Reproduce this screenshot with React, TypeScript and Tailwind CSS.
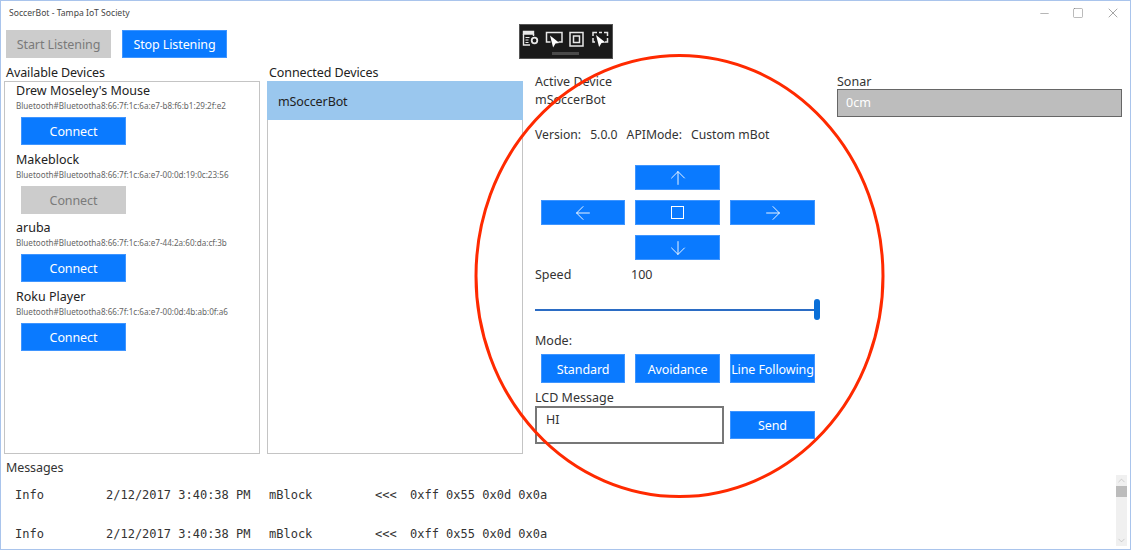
import { ArrowDown, ArrowLeft, ArrowRight, ArrowUp, ChevronDown, ChevronUp, Minus, Square, X } from 'lucide-react';
import type { ReactNode } from 'react';

const DEVICES = [
  { name: "Drew Moseley's Mouse", id: 'Bluetooth#Bluetootha8:66:7f:1c:6a:e7-b8:f6:b1:29:2f:e2', disabled: false },
  { name: 'Makeblock', id: 'Bluetooth#Bluetootha8:66:7f:1c:6a:e7-00:0d:19:0c:23:56', disabled: true },
  { name: 'aruba', id: 'Bluetooth#Bluetootha8:66:7f:1c:6a:e7-44:2a:60:da:cf:3b', disabled: false },
  { name: 'Roku Player', id: 'Bluetooth#Bluetootha8:66:7f:1c:6a:e7-00:0d:4b:ab:0f:a6', disabled: false },
];

const MESSAGES = [
  { level: 'Info', time: '2/12/2017 3:40:38 PM', source: 'mBlock', dir: '<<<', data: '0xff 0x55 0x0d 0x0a' },
  { level: 'Info', time: '2/12/2017 3:40:38 PM', source: 'mBlock', dir: '<<<', data: '0xff 0x55 0x0d 0x0a' },
];

function BlueButton({ children, className }: { children: ReactNode; className: string }) {
  return (
    <button className={`flex items-center justify-center pt-[3px] bg-[#0a7aff] border border-[#3f95ff] text-white text-[12.5px] tracking-[-0.1px] whitespace-nowrap ${className}`}>
      {children}
    </button>
  );
}

function ArrowButton({ children, className }: { children: ReactNode; className: string }) {
  return (
    <button className={`flex items-center justify-center bg-[#0a7aff] border border-[#3f95ff] text-white ${className}`}>
      {children}
    </button>
  );
}

function GreyButton({ children, className }: { children: ReactNode; className: string }) {
  return (
    <button className={`pt-[3px] bg-[#cccccc] text-[#7a7a7a] text-[12.5px] tracking-[-0.1px] ${className}`}>
      {children}
    </button>
  );
}

function CaptureBar() {
  return (
    <div className="absolute left-[518px] top-[23px] w-[94px] h-[35px] bg-[#1a1a1a] border border-[#555]">
      <svg width="92" height="33" viewBox="0 0 92 33" fill="none" stroke="#e8e8e8" strokeWidth="1.4">
        <path d="M3.5 6.5h10v2.5h-10z" fill="#e8e8e8" />
        <path d="M3.5 9v11h6.5M13.5 9v2" />
        <path d="M5.5 12.5h4M5.5 15h3M5.5 17.5h3" strokeWidth="1.2" />
        <circle cx="14.5" cy="15.5" r="2.8" strokeWidth="1.8" />
        <path d="M30.5 17h-4V7.5h15.5V17h-3.5" strokeWidth="1.5" />
        <path d="M30 10.5l9.5 7.5-4 .6-2.4 3.9z" fill="#fff" stroke="none" />
        <rect x="50" y="7.5" width="13" height="13.5" strokeWidth="1.5" />
        <rect x="53.5" y="11" width="6" height="6.5" strokeWidth="1.5" />
        <path d="M73 11V7.5h4M79 7.5h3M84 7.5h3.5V11M87.5 13v4H85M73 13v4h2" strokeWidth="1.5" />
        <path d="M76 10l9.5 7.5-4 .6-2.4 3.9z" fill="#fff" stroke="none" />
      </svg>
      <div className="absolute left-[32px] top-[27px] w-[27px] h-[3px] bg-[#4a4a4a]" />
    </div>
  );
}

function DeviceRow({ name, id, disabled }: { name: string; id: string; disabled: boolean }) {
  return (
    <div className="h-[68.5px] pl-[11px]">
      <p className="text-[12.5px] leading-[17px] text-[#222]">{name}</p>
      <p className="text-[8.1px] leading-[14px] text-[#666] whitespace-nowrap">{id}</p>
      {disabled ? (
        <GreyButton className="ml-[5px] mt-[4px] w-[105px] h-[28px]">Connect</GreyButton>
      ) : (
        <BlueButton className="ml-[5px] mt-[4px] w-[105px] h-[28px]">Connect</BlueButton>
      )}
    </div>
  );
}

export default function App() {
  return (
    <div className="relative w-[1131px] h-[550px] overflow-hidden bg-white border border-[#a9c4ec] font-['Noto_Sans',sans-serif] text-[#222]">
      {/* title bar */}
      <div className="flex items-center justify-between h-[24px] pl-[8px]">
        <span className="text-[8.6px] text-[#444]">SoccerBot - Tampa IoT Society</span>
        <div className="flex items-center gap-[21px] pr-[9px] text-[#777]">
          <Minus size={13} strokeWidth={1} />
          <Square size={12} strokeWidth={1} />
          <X size={16} strokeWidth={1} />
        </div>
      </div>

      {/* listening buttons */}
      <div className="flex gap-[11px] mt-[5px] ml-[5px]">
        <GreyButton className="w-[105px] h-[28px]">Start Listening</GreyButton>
        <BlueButton className="w-[105px] h-[28px]">Stop Listening</BlueButton>
      </div>

      <CaptureBar />

      {/* main area */}
      <div className="flex mt-[6px] h-[390px]">
        <section className="ml-[3px] w-[256px] flex flex-col">
          <h2 className="pl-[2px] h-[17px] text-[12.5px] tracking-[-0.1px] leading-[17px] font-normal">Available Devices</h2>
          <div className="flex-1 border border-[#c4c4c4]">
            {DEVICES.map(d => <DeviceRow key={d.id} {...d} />)}
          </div>
        </section>

        <section className="ml-[7px] w-[256px] flex flex-col">
          <h2 className="pl-[2px] h-[17px] text-[12.5px] tracking-[-0.1px] leading-[17px] font-normal">Connected Devices</h2>
          <div className="flex-1 border border-[#c4c4c4]">
            <div className="h-[39px] -mt-px -mx-px bg-[#9ac7ee] flex items-center pl-[11px] pt-[3px] text-[12.5px] tracking-[-0.1px]">mSoccerBot</div>
          </div>
        </section>

        <section className="ml-[12px] w-[290px] pt-[9px] text-[12.5px] text-[#333]">
          <p className="leading-[18px]">Active Device</p>
          <p className="leading-[18px]">mSoccerBot</p>
          <div className="flex gap-[9px] mt-[17px] text-[12.2px] leading-[18px] whitespace-nowrap">
            <span>Version:</span><span>5.0.0</span><span>APIMode:</span><span>Custom mBot</span>
          </div>

          <div className="mt-[21px] ml-[6px] grid grid-cols-[84px_85px_85px] grid-rows-[25px_25px_25px] gap-x-[10px] gap-y-[10px] w-[274px]">
            <ArrowButton className="col-start-2"><ArrowUp size={22} strokeWidth={1} /></ArrowButton>
            <ArrowButton className="col-start-1 row-start-2"><ArrowLeft size={22} strokeWidth={1} /></ArrowButton>
            <ArrowButton className="col-start-2 row-start-2"><span className="block w-[13px] h-[13px] border border-white" /></ArrowButton>
            <ArrowButton className="col-start-3 row-start-2"><ArrowRight size={22} strokeWidth={1} /></ArrowButton>
            <ArrowButton className="col-start-2 row-start-3"><ArrowDown size={22} strokeWidth={1} /></ArrowButton>
          </div>

          <div className="flex mt-[6px] leading-[18px]">
            <span className="w-[96px]">Speed</span><span>100</span>
          </div>
          <div className="relative mt-[15px] w-[286px] h-[21px] flex items-center">
            <div className="w-[280px] h-[2px] bg-[#2b6cc4]" />
            <div className="w-[6px] h-[21px] rounded-[3px] bg-[#0a6fd8] -ml-[1px]" />
          </div>

          <p className="mt-[12px] leading-[18px]">Mode:</p>
          <div className="flex gap-[10px] ml-[6px] mt-[4px]">
            <BlueButton className="w-[84px] h-[29px]">Standard</BlueButton>
            <BlueButton className="w-[85px] h-[29px]">Avoidance</BlueButton>
            <BlueButton className="w-[85px] h-[29px]">Line Following</BlueButton>
          </div>

          <p className="mt-[6px] leading-[18px]">LCD Message</p>
          <div className="flex items-end">
            <div className="w-[189px] h-[38px] -mt-[1px] border-2 border-[#777] pl-[9px] pt-[3px] leading-[18px]">HI</div>
            <BlueButton className="ml-[6px] mb-[5px] w-[85px] h-[28px]">Send</BlueButton>
          </div>
        </section>

        <section className="ml-[12px] w-[285px] pt-[10px]">
          <p className="text-[12.5px] leading-[15px] text-[#333]">Sonar</p>
          <div className="h-[28px] bg-[#bdbdbd] border border-[#666] flex items-center pl-[8px] text-[12.5px] text-white">0cm</div>
        </section>
      </div>

      {/* messages */}
      <div className="mt-[5px] ml-[5px] text-[12.5px] tracking-[-0.1px] leading-[18px] text-[#333]">Messages</div>
      <div className="mt-[9px] ml-[14px] font-['DejaVu_Sans_Mono',monospace] text-[12px] text-[#333] whitespace-pre">
        {MESSAGES.map((m, i) => (
          <div key={i} className="flex h-[39px]">
            <span className="w-[91px]">{m.level}</span>
            <span className="w-[163px]">{m.time}</span>
            <span className="w-[106px]">{m.source}</span>
            <span className="w-[35px]">{m.dir}</span>
            <span>{m.data}</span>
          </div>
        ))}
      </div>

      {/* log scrollbar */}
      <div className="absolute left-[1115px] top-[474px] w-[11px] h-[71px] bg-[#f0f0f0] flex flex-col items-center justify-between text-[#a0a0a0]">
        <div className="w-full flex flex-col items-center">
          <ChevronUp size={11} strokeWidth={1} />
          <div className="w-full h-[11px] bg-[#bcbcbc]" />
        </div>
        <ChevronDown size={11} strokeWidth={1} />
      </div>

      {/* red annotation drawn over the screenshot */}
      <svg className="absolute left-0 top-0 pointer-events-none" width="1131" height="550" fill="none">
        <ellipse cx="678.5" cy="275" rx="203.5" ry="220.5" stroke="#ff2a00" strokeWidth="3" />
      </svg>
    </div>
  );
}
